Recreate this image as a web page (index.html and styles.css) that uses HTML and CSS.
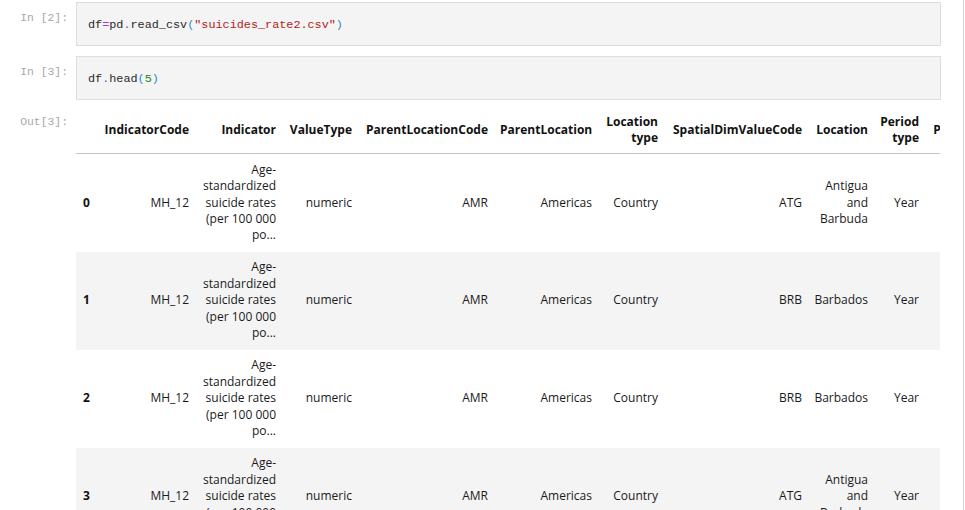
FILE: index.html
```html
<!DOCTYPE html>
<html>
<head>
<meta charset="utf-8">
<link rel="stylesheet" href="styles.css">
</head>
<body>
<div class="notebook">
  <div class="cell">
    <div class="prompt">In&nbsp;[2]:</div>
    <div class="input"><code><span class="n">df</span><span class="o">=</span><span class="n">pd</span><span class="o">.</span><span class="n">read_csv</span><span class="p">(</span><span class="s">"suicides_rate2.csv"</span><span class="p">)</span></code></div>
  </div>
  <div class="cell">
    <div class="prompt">In&nbsp;[3]:</div>
    <div class="input"><code><span class="n">df</span><span class="o">.</span><span class="n">head</span><span class="p">(</span><span class="m">5</span><span class="p">)</span></code></div>
  </div>
  <div class="cell out">
    <div class="prompt">Out[3]:</div>
    <div class="output">
      <table class="df">
        <colgroup>
          <col class="c-idx"><col class="c-ic"><col class="c-ind"><col class="c-vt"><col class="c-plc"><col class="c-pl"><col class="c-lt"><col class="c-sd"><col class="c-loc"><col class="c-pt"><col class="c-p"><col class="c-x"><col class="c-x">
        </colgroup>
        <thead>
          <tr><th></th><th>IndicatorCode</th><th>Indicator</th><th>ValueType</th><th>ParentLocationCode</th><th>ParentLocation</th><th>Location<br>type</th><th>SpatialDimValueCode</th><th>Location</th><th>Period<br>type</th><th>Period</th><th>IsLatestYear</th><th>Dim1 type</th></tr>
        </thead>
        <tbody>
          <tr><th>0</th><td>MH_12</td><td>Age-<br>standardized<br>suicide rates<br>(per 100 000<br>po...</td><td>numeric</td><td>AMR</td><td>Americas</td><td>Country</td><td>ATG</td><td>Antigua<br>and<br>Barbuda</td><td>Year</td><td>2019</td><td>True</td><td>Sex</td></tr>
          <tr><th>1</th><td>MH_12</td><td>Age-<br>standardized<br>suicide rates<br>(per 100 000<br>po...</td><td>numeric</td><td>AMR</td><td>Americas</td><td>Country</td><td>BRB</td><td>Barbados</td><td>Year</td><td>2019</td><td>True</td><td>Sex</td></tr>
          <tr><th>2</th><td>MH_12</td><td>Age-<br>standardized<br>suicide rates<br>(per 100 000<br>po...</td><td>numeric</td><td>AMR</td><td>Americas</td><td>Country</td><td>BRB</td><td>Barbados</td><td>Year</td><td>2019</td><td>True</td><td>Sex</td></tr>
          <tr><th>3</th><td>MH_12</td><td>Age-<br>standardized<br>suicide rates<br>(per 100 000<br>po...</td><td>numeric</td><td>AMR</td><td>Americas</td><td>Country</td><td>ATG</td><td>Antigua<br>and<br>Barbuda</td><td>Year</td><td>2019</td><td>True</td><td>Sex</td></tr>
        </tbody>
      </table>
    </div>
  </div>
</div>
</body>
</html>
```
FILE: styles.css
```css
html, body {
  margin: 0;
  padding: 0;
  background: #ffffff;
  height: 100%;
  overflow: hidden;
}
body {
  font-family: "Open Sans", "Noto Sans", sans-serif;
}
.notebook {
  width: 964px;
  height: 510px;
  border-right: 1px solid #d6d6d6;
  padding-top: 2px;
  box-sizing: border-box;
}
.cell {
  display: flex;
  align-items: flex-start;
  margin-bottom: 10px;
}
.prompt {
  width: 68px;
  flex: 0 0 68px;
  margin-right: 8px;
  text-align: right;
  font-family: "Liberation Mono", monospace;
  font-size: 11.4px;
  color: #a8a8a8;
  padding-top: 9px;
  line-height: 14px;
}
.input {
  width: 865px;
  height: 44px;
  box-sizing: border-box;
  background: #f4f4f4;
  border: 1px solid #dedede;
  display: flex;
  align-items: center;
  padding-left: 11px;
}
.input code {
  font-family: "Liberation Mono", monospace;
  font-size: 11.8px;
  color: #333333;
  padding-top: 1px;
}
.n { color: #2b2b2b; }
.o { color: #a43ec1; }
.p { color: #2f88c8; }
.s { color: #b22222; }
.m { color: #138a13; }
.out {
  margin-top: -10px;
}
.out .prompt {
  padding-top: 15px;
}
.output {
  width: 864px;
  overflow: hidden;
  padding-top: 7px;
}
table.df {
  border-collapse: collapse;
  table-layout: fixed;
  width: 1094px;
  font-size: 12px;
  color: #1a1a1a;
}
.c-idx { width: 21px; }
.c-ic { width: 98px; }
.c-ind { width: 87px; }
.c-vt { width: 76px; }
.c-plc { width: 136px; }
.c-pl { width: 104px; }
.c-lt { width: 66px; }
.c-sd { width: 144px; }
.c-loc { width: 66px; }
.c-pt { width: 51px; }
.c-p { width: 53px; }
.c-x { width: 96px; }
table.df th, table.df td {
  padding: 0 6px;
  text-align: right;
  vertical-align: middle;
  line-height: 16.4px;
  white-space: nowrap;
}
table.df thead th {
  font-weight: 700;
  color: #111;
  height: 46px;
  border-bottom: 1px solid #c4c4c4;
}
table.df tbody th {
  font-weight: 700;
  text-align: left;
  padding-left: 7px;
  color: #111;
}
table.df tbody tr {
  height: 98px;
}
table.df tbody tr:nth-child(even) {
  background: #f4f4f4;
}
```
